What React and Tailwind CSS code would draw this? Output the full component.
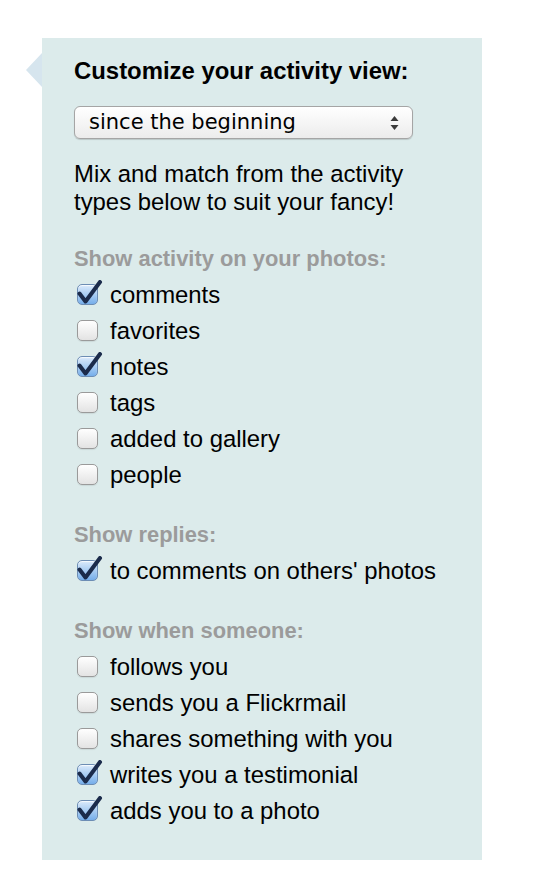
// Activity view customizer panel
const sections = [
  {
    title: "Show activity on your photos:",
    items: [
      { label: "comments", checked: true },
      { label: "favorites", checked: false },
      { label: "notes", checked: true },
      { label: "tags", checked: false },
      { label: "added to gallery", checked: false },
      { label: "people", checked: false },
    ],
  },
  {
    title: "Show replies:",
    items: [{ label: "to comments on others' photos", checked: true }],
  },
  {
    title: "Show when someone:",
    items: [
      { label: "follows you", checked: false },
      { label: "sends you a Flickrmail", checked: false },
      { label: "shares something with you", checked: false },
      { label: "writes you a testimonial", checked: true },
      { label: "adds you to a photo", checked: true },
    ],
  },
];

/** Mac-style checkbox, with the tick overflowing the box when checked */
function Check({ checked }) {
  return (
    <span className="relative ml-[2px] mr-[12px] flex h-[22px] w-[22px] shrink-0 items-center justify-center">
      <span
        className={
          checked
            ? "h-[21px] w-[21px] rounded-[5px] border border-[#6d8db4] bg-gradient-to-b from-[#dbeafb] via-[#a9cdf3] to-[#76aeea] shadow-[inset_0_1px_1px_rgba(255,255,255,0.8)]"
            : "h-[21px] w-[21px] rounded-[5px] border border-[#9a9a9a] bg-gradient-to-b from-[#ffffff] to-[#e3e3e3] shadow-[0_1px_1px_rgba(0,0,0,0.08)]"
        }
      />
      {checked && (
        <svg
          className="absolute left-[1px] top-[-4px]"
          width="26"
          height="26"
          viewBox="0 0 26 26"
        >
          <path
            d="M2.5 13.5 L8.5 21.5 L23 2"
            fill="none"
            stroke="#1b2b4b"
            strokeWidth="4"
            strokeLinecap="round"
            strokeLinejoin="round"
          />
        </svg>
      )}
    </span>
  );
}

export default function App() {
  return (
    <div className="min-h-[886px] bg-white pt-[38px] font-['Liberation_Sans',Arial,sans-serif]">
      <div className="relative ml-[42px] w-[440px] bg-[#dcebeb] px-[32px] pt-[19px] pb-[32px]">
        {/* Pointer on the left edge */}
        <span className="absolute left-[-16px] top-[15px] h-0 w-0 border-y-[17px] border-r-[16px] border-y-transparent border-r-[#d6e5ee]" />

        <h2 className="text-[23.9px] font-bold leading-[28px] text-black">
          Customize your activity view:
        </h2>

        {/* Select */}
        <div className="mt-[21px] flex h-[33px] w-[339px] items-center justify-between rounded-[6px] border border-[#a5a5a5] bg-gradient-to-b from-[#ffffff] to-[#ececec] pl-[14px] pr-[13px] shadow-[0_1px_1px_rgba(0,0,0,0.15)]">
          <span className="font-['DejaVu_Sans',sans-serif] text-[21px] leading-none text-black">
            since the beginning
          </span>
          <svg width="9" height="16" viewBox="0 0 9 16">
            <path d="M4.5 1 L8.5 6 L0.5 6 Z" fill="#3a3a3a" />
            <path d="M4.5 15 L8.5 10 L0.5 10 Z" fill="#3a3a3a" />
          </svg>
        </div>

        <p className="mt-[21px] text-[23.9px] leading-[28px] text-black">
          Mix and match from the activity
          <br />
          types below to suit your fancy!
        </p>

        {sections.map((s) => (
          <div key={s.title} className="mt-[30px]">
            <h3 className="text-[21.9px] font-bold leading-[26px] text-[#9b9b9b]">
              {s.title}
            </h3>
            <ul className="mt-[4px]">
              {s.items.map((it) => (
                <li key={it.label} className="flex h-[36px] items-center pt-[1px]">
                  <Check checked={it.checked} />
                  <span className="text-[23.9px] leading-none text-black">
                    {it.label}
                  </span>
                </li>
              ))}
            </ul>
          </div>
        ))}
      </div>
    </div>
  );
}
